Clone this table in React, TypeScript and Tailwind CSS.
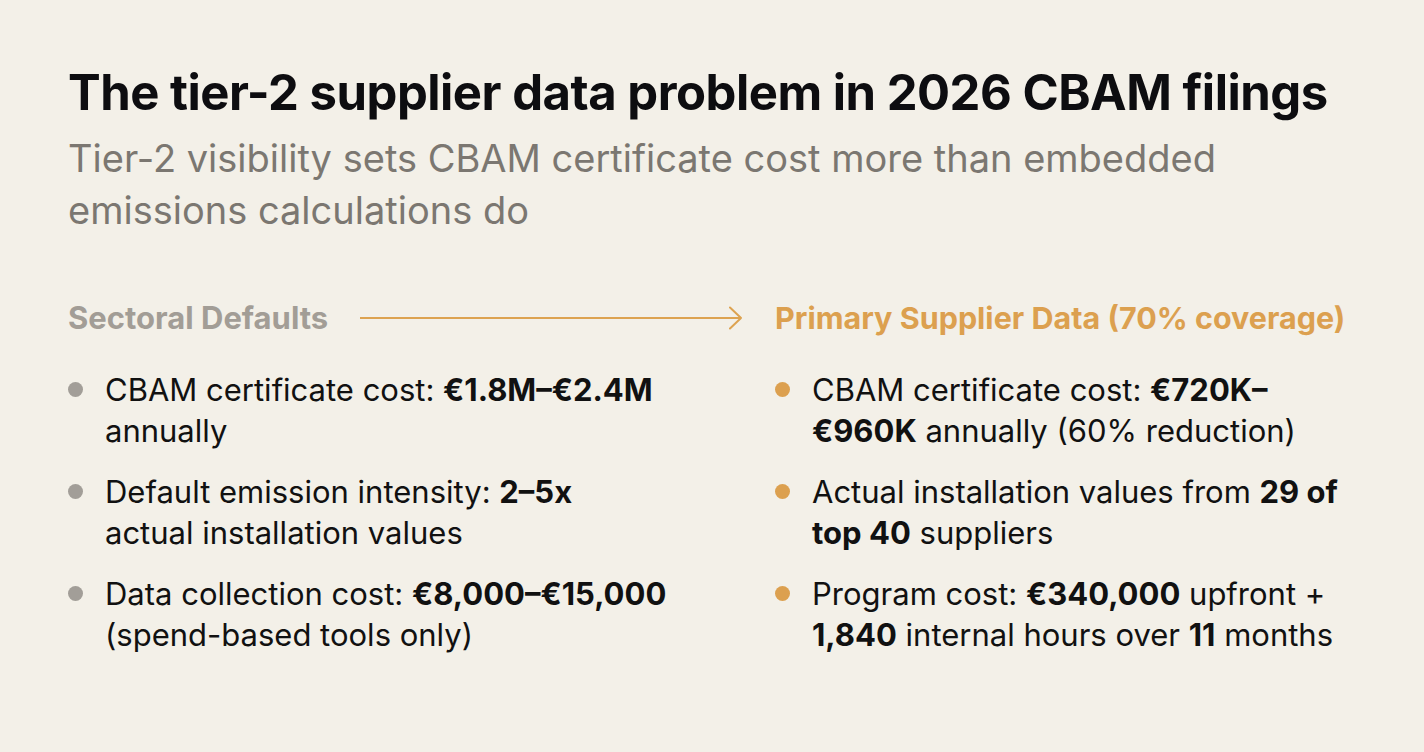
function Bullet({ color, w, children }: { color: string; w: string; children: React.ReactNode }) {
  return (
    <li className="flex items-start gap-[22px]">
      <span className={`mt-[13px] h-[15px] w-[15px] shrink-0 rounded-full ${color}`} />
      <p className={`${w} text-[31px] leading-[41px] text-[#111]`}>{children}</p>
    </li>
  );
}

export default function App() {
  return (
    <div
      className="h-[752px] w-[1424px] bg-[#f3f0e8] px-[68px] pt-[64px]"
      style={{ fontFamily: 'Inter, "Noto Sans", sans-serif' }}
    >
      <h1 className="text-[49px] font-bold leading-[58px] tracking-[-0.01em] text-[#0d0d10]">
        The tier-2 supplier data problem in 2026 CBAM filings
      </h1>
      <p className="mt-[10px] max-w-[1200px] text-[38px] leading-[52px] text-[#7b7771]">
        Tier-2 visibility sets CBAM certificate cost more than embedded emissions calculations do
      </p>

      <div className="mt-[60px] grid grid-cols-[707px_1fr]">
        <div>
          <div className="flex h-[44px] items-center">
            <h2 className="text-[31px] font-bold text-[#a29d96]">Sectoral Defaults</h2>
            <svg className="ml-[32px]" width="384" height="24" viewBox="0 0 384 24" fill="none">
              <path d="M0 12H381M370 1.5L381 12L370 22.5" stroke="#dda351" strokeWidth="2" strokeLinecap="round" strokeLinejoin="round" />
            </svg>
          </div>
          <ul className="mt-[29px] flex flex-col gap-[20px]">
            <Bullet color="bg-[#a29e98]" w="w-[600px]">
              CBAM certificate cost: <b className="font-bold">€1.8M–€2.4M</b> annually
            </Bullet>
            <Bullet color="bg-[#a29e98]" w="w-[600px]">
              Default emission intensity: <b className="font-bold">2–5x</b>
              <br />
              actual installation values
            </Bullet>
            <Bullet color="bg-[#a29e98]" w="w-[600px]">
              Data collection cost: <b className="font-bold">€8,000–€15,000</b> (spend-based tools only)
            </Bullet>
          </ul>
        </div>
        <div>
          <div className="flex h-[44px] items-center">
            <h2 className="text-[30.5px] font-bold text-[#dca04f]">Primary Supplier Data (70% coverage)</h2>
          </div>
          <ul className="mt-[29px] flex flex-col gap-[20px]">
            <Bullet color="bg-[#dca04f]" w="w-[550px]">
              CBAM certificate cost: <b className="font-bold">€720K–€960K</b> annually (60% reduction)
            </Bullet>
            <Bullet color="bg-[#dca04f]" w="w-[550px]">
              Actual installation values from <b className="font-bold">29 of top 40</b> suppliers
            </Bullet>
            <Bullet color="bg-[#dca04f]" w="w-[550px]">
              Program cost: <b className="font-bold">€340,000</b> upfront + <b className="font-bold">1,840</b> internal hours over <b className="font-bold">11</b> months
            </Bullet>
          </ul>
        </div>
      </div>
    </div>
  );
}
